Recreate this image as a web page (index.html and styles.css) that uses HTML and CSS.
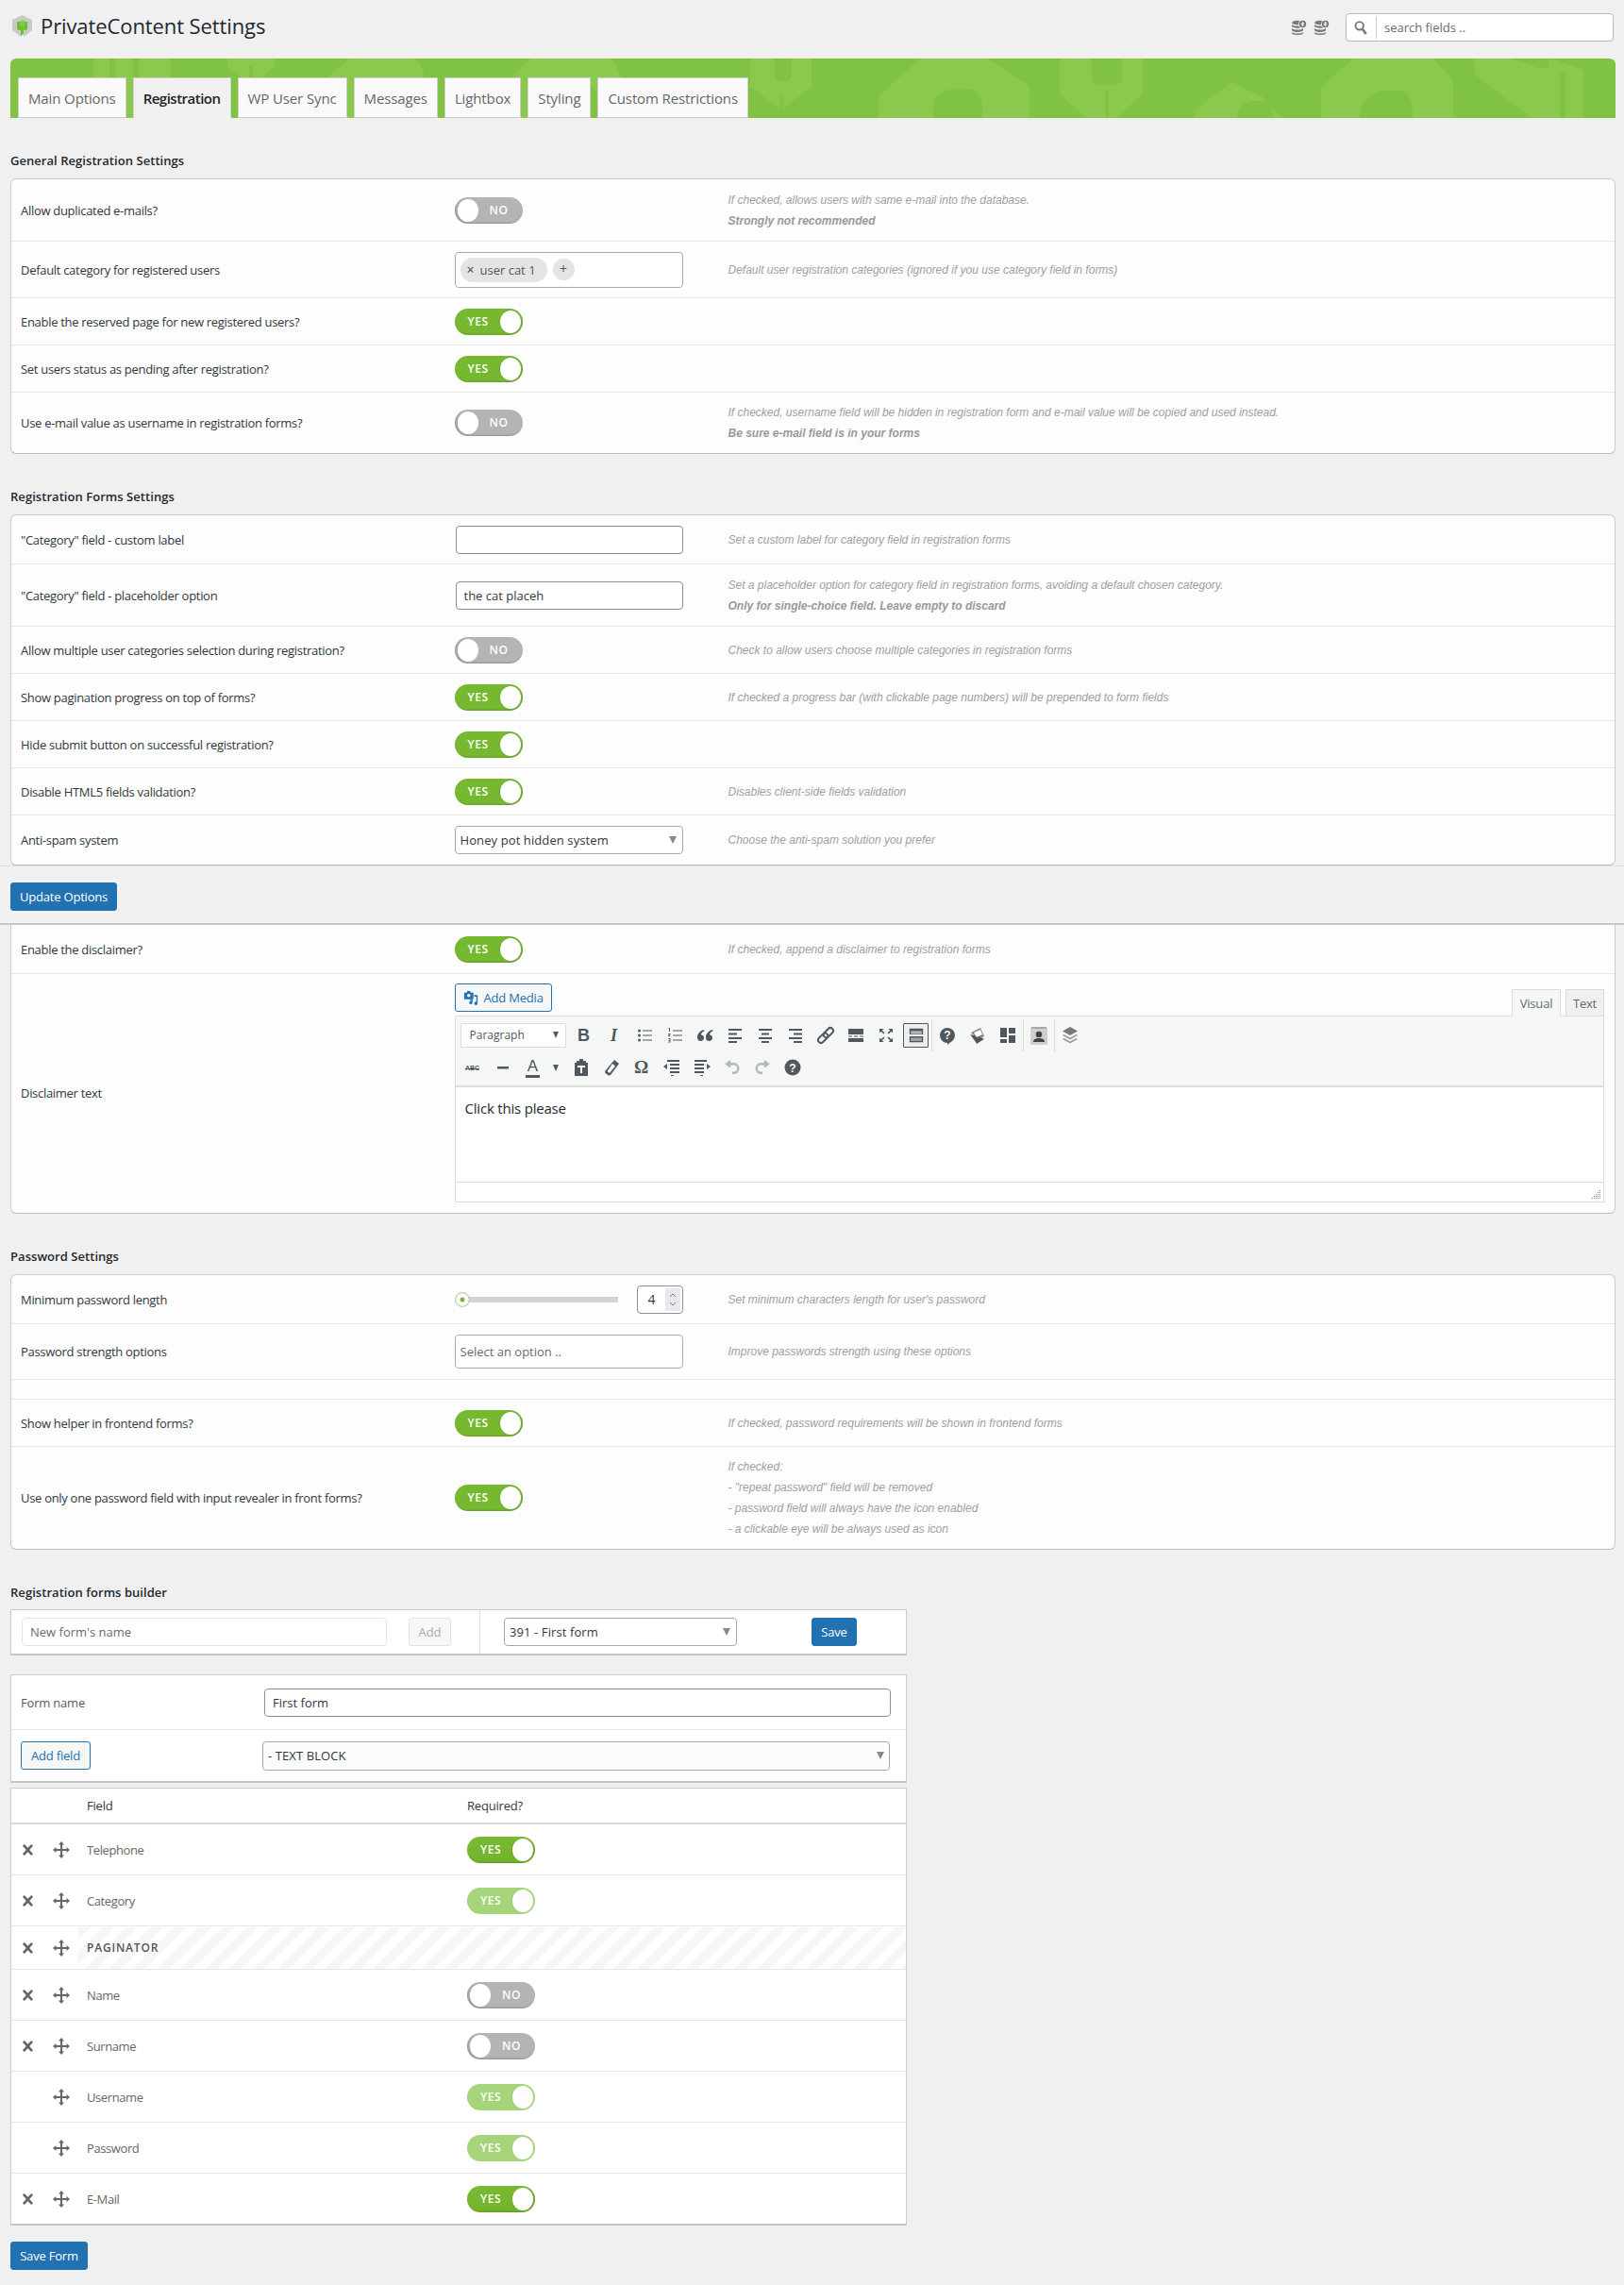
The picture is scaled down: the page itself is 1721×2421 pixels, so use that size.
FILE: index.html
```html
<!DOCTYPE html>
<html lang="en">
<head>
<meta charset="utf-8">
<title>PrivateContent Settings</title>
<link rel="stylesheet" href="styles.css">
</head>
<body>
<svg class="defs" width="0" height="0" aria-hidden="true">
  <symbol id="i-move" viewBox="0 0 18 18"><path d="M9 0l3 3.4h-2v4.6h4.600v-2l3.400 3-3.400 3v-2h-4.600v4.600h2l-3 3.400-3-3.400h2v-4.600h-4.600v2l-3.400-3 3.400-3v2h4.600v-4.600h-2z"/></symbol>
  <symbol id="i-x" viewBox="0 0 14 14"><path d="M1 2.500l2-2 4 4.200 4-4.200 2 2-4.200 4.500 4.200 4.500-2 2-4-4.200-4 4.200-2-2 4.200-4.500z"/></symbol>
  <symbol id="i-db-up" viewBox="0 0 16 16"><ellipse cx="6" cy="3" rx="6" ry="2.200"/><path d="M0 5v1.500c0 1.200 2.700 2.200 6 2.200s6-1 6-2.200v-1.500c-1 1-3.500 1.600-6 1.600s-5-.6-6-1.600zM0 9v1.800c0 1.200 2.700 2.200 6 2.200s6-1 6-2.200v-1.800c-1 1-3.500 1.600-6 1.600s-5-.6-6-1.600zM0 13v1c0 1.200 2.700 2 6 2s6-.8 6-2v-1c-1 1-3.500 1.500-6 1.500s-5-.5-6-1.500z"/><circle cx="11.500" cy="4.500" r="4.500" fill="#f1f1f1"/><circle cx="11.500" cy="4.500" r="3.700"/><path d="M11.500 2l2.200 2.500h-1.300v2.300h-1.800v-2.300h-1.300z" fill="#f1f1f1"/></symbol>
  <symbol id="i-db-down" viewBox="0 0 16 16"><ellipse cx="6" cy="3" rx="6" ry="2.200"/><path d="M0 5v1.500c0 1.200 2.700 2.200 6 2.200s6-1 6-2.200v-1.500c-1 1-3.500 1.600-6 1.600s-5-.6-6-1.600zM0 9v1.800c0 1.200 2.700 2.200 6 2.200s6-1 6-2.200v-1.800c-1 1-3.500 1.600-6 1.600s-5-.6-6-1.600zM0 13v1c0 1.200 2.700 2 6 2s6-.8 6-2v-1c-1 1-3.500 1.500-6 1.500s-5-.5-6-1.500z"/><circle cx="11.500" cy="4.500" r="4.500" fill="#f1f1f1"/><circle cx="11.500" cy="4.500" r="3.700"/><path d="M11.500 7l-2.200-2.500h1.300v-2.300h1.800v2.300h1.300z" fill="#f1f1f1"/></symbol>
</svg>

<div class="page">
  <header class="head">
    <div class="brand">
      <svg class="logo" viewBox="0 0 21 23" width="21" height="23"><path d="M10.500 0l10.500 5v11l-9 7v-6h-3v6l-9-7v-11z" fill="#c9c9c9"/><path d="M5 7h11v7q0 2-2 2h-2v4l-3 2v-6h-2q-2 0-2-2z" fill="#6fbf2f"/><path d="M8 5h5v7h-5z" fill="#8fd24e" opacity=".6"/></svg>
      <h1 class="title">PrivateContent Settings</h1>
    </div>
    <div class="tools">
      <svg class="db" width="16" height="16"><use href="#i-db-up"/></svg>
      <svg class="db db-2" width="16" height="16"><use href="#i-db-down"/></svg>
      <label class="search">
        <svg class="search-ico" viewBox="0 0 16 18" width="14" height="17"><circle cx="6.500" cy="6.500" r="4.800" fill="none" stroke="#777" stroke-width="2.200"/><path d="M10 10.500l4.500 6" stroke="#777" stroke-width="3" fill="none"/></svg>
        <input class="search-input" type="text" placeholder="search fields ..">
      </label>
    </div>
  </header>

  <nav class="tabs">
    <svg class="tabs-art" viewBox="0 0 1701 63" preserveAspectRatio="none" aria-hidden="true">
      <g fill="#8ac94e">
        <path d="M88 0h82v63h-82z"/><path d="M230 0h50v8l-25 22-25-22z"/>
        <path d="M329 26l30-26h70q10 8 10 25v38h-110z"/><path d="M526 24l26-24h85l12 22v41h-123z"/>
        <path d="M784 0h65v30l-32 24-33-24z"/>
        <path d="M920 40l45-40h70l45 30v33h-160z"/><path d="M1112 0h88v37l-28 26h-32l-28-26z"/><path d="M1255 55l39-30 35 17 18 21h-92z"/>
        <path d="M1389 30l34-30h85l21 24v39h-140z"/><path d="M1551 0h80l36 12v51h-55l-60-46z"/>
      </g>
      <g fill="#80c342">
        <path d="M105 0h6v63h-6zM130 0h6v63h-6z"/><path d="M253 8h4v22h-4z"/>
        <path d="M378 45q0-18 20-18h22q4 6 4 18v18h-46z"/><path d="M578 45q0-16 16-16h22q6 6 6 18v16h-44z"/>
        <path d="M810 0v16q0 8 8 8h2q8 0 8-8v-16zM815 40h5v23h-5z"/>
        <path d="M978 50q0-14 20-18h20q12 4 12 20v11h-52z"/><path d="M1146 0v20q0 8 10 8h14q8 0 8-8v-20zM1160 35h4v28h-4z"/>
        <path d="M1300 63q0-18 20-18h12q6 6 6 18z"/><path d="M1430 60q0-20 24-26h22q10 6 10 26v3h-56z"/><path d="M1590 0h40v10h-10zM1642 15h6v48h-6z"/>
      </g>
    </svg>
    <a class="tab">Main Options</a>
    <a class="tab tab-active">Registration</a>
    <a class="tab">WP User Sync</a>
    <a class="tab">Messages</a>
    <a class="tab">Lightbox</a>
    <a class="tab">Styling</a>
    <a class="tab">Custom Restrictions</a>
  </nav>

  <h3 class="sect">General Registration Settings</h3>
  <section class="card">
    <div class="row h66">
      <div class="lbl">Allow duplicated e-mails?</div>
      <div class="ctl"><span class="tg tg-no"><span class="tg-t">NO</span><i class="knob"></i></span></div>
      <div class="help">If checked, allows users with same e-mail into the database.<br><strong>Strongly not recommended</strong></div>
    </div>
    <div class="row h60">
      <div class="lbl">Default category for registered users</div>
      <div class="ctl"><div class="tagbox"><span class="tag"><b class="tag-x">×</b>user cat 1</span><span class="tag-add">+</span></div></div>
      <div class="help">Default user registration categories (ignored if you use category field in forms)</div>
    </div>
    <div class="row">
      <div class="lbl">Enable the reserved page for new registered users?</div>
      <div class="ctl"><span class="tg tg-yes"><span class="tg-t">YES</span><i class="knob"></i></span></div>
      <div class="help"></div>
    </div>
    <div class="row">
      <div class="lbl">Set users status as pending after registration?</div>
      <div class="ctl"><span class="tg tg-yes"><span class="tg-t">YES</span><i class="knob"></i></span></div>
      <div class="help"></div>
    </div>
    <div class="row h64 last">
      <div class="lbl">Use e-mail value as username in registration forms?</div>
      <div class="ctl"><span class="tg tg-no"><span class="tg-t">NO</span><i class="knob"></i></span></div>
      <div class="help">If checked, username field will be hidden in registration form and e-mail value will be copied and used instead.<br><strong>Be sure e-mail field is in your forms</strong></div>
    </div>
  </section>

  <h3 class="sect">Registration Forms Settings</h3>
  <section class="card">
    <div class="row h52">
      <div class="lbl">"Category" field - custom label</div>
      <div class="ctl"><input class="inp inp-shift" type="text"></div>
      <div class="help">Set a custom label for category field in registration forms</div>
    </div>
    <div class="row h66">
      <div class="lbl">"Category" field - placeholder option</div>
      <div class="ctl"><input class="inp inp-shift" type="text" value="the cat placeh"></div>
      <div class="help">Set a placeholder option for category field in registration forms, avoiding a default chosen category.<br><strong>Only for single-choice field. Leave empty to discard</strong></div>
    </div>
    <div class="row">
      <div class="lbl">Allow multiple user categories selection during registration?</div>
      <div class="ctl"><span class="tg tg-no"><span class="tg-t">NO</span><i class="knob"></i></span></div>
      <div class="help">Check to allow users choose multiple categories in registration forms</div>
    </div>
    <div class="row">
      <div class="lbl">Show pagination progress on top of forms?</div>
      <div class="ctl"><span class="tg tg-yes"><span class="tg-t">YES</span><i class="knob"></i></span></div>
      <div class="help">If checked a progress bar (with clickable page numbers) will be prepended to form fields</div>
    </div>
    <div class="row">
      <div class="lbl">Hide submit button on successful registration?</div>
      <div class="ctl"><span class="tg tg-yes"><span class="tg-t">YES</span><i class="knob"></i></span></div>
      <div class="help"></div>
    </div>
    <div class="row">
      <div class="lbl">Disable HTML5 fields validation?</div>
      <div class="ctl"><span class="tg tg-yes"><span class="tg-t">YES</span><i class="knob"></i></span></div>
      <div class="help">Disables client-side fields validation</div>
    </div>
    <div class="row h52 last">
      <div class="lbl">Anti-spam system</div>
      <div class="ctl"><div class="sel">Honey pot hidden system</div></div>
      <div class="help">Choose the anti-spam solution you prefer</div>
    </div>
  </section>

  <div class="savebar"><button class="btn-primary">Update Options</button></div>

  <section class="card card-after-bar">
    <div class="row h52">
      <div class="lbl">Enable the disclaimer?</div>
      <div class="ctl"><span class="tg tg-yes"><span class="tg-t">YES</span><i class="knob"></i></span></div>
      <div class="help">If checked, append a disclaimer to registration forms</div>
    </div>
    <div class="row row-editor last">
      <div class="lbl">Disclaimer text</div>
      <div class="editor">
        <div class="ed-top">
          <button class="btn-media"><svg viewBox="0 0 18 18" width="18" height="18"><path d="M1 3h3l1-2h3l1 2h3v8h-11z" fill="#2271b1"/><circle cx="6.500" cy="6.500" r="2" fill="#fff"/><path d="M13 6h4v10a2 2 0 1 1-1.500-2v-6h-2.500zM8 11h3v4a2 2 0 1 1-1.500-2v-1h-1.500z" fill="#2271b1"/></svg>Add Media</button>
          <div class="ed-tabs"><span class="ed-tab ed-tab-on">Visual</span><span class="ed-tab">Text</span></div>
        </div>
        <div class="toolbar">
          <div class="tb-row">
            <div class="tb-sel">Paragraph</div>
            <span class="tb"><span class="g-b">B</span></span>
            <span class="tb"><span class="g-i">I</span></span>
            <span class="tb"><svg viewBox="0 0 20 20"><circle cx="4.500" cy="5" r="1.500"/><circle cx="4.500" cy="10" r="1.500"/><circle cx="4.500" cy="15" r="1.500"/><path d="M8 4.500h10v1h-10zM8 9.500h10v1h-10zM8 14.500h10v1h-10z"/></svg></span>
            <span class="tb"><svg viewBox="0 0 20 20"><path d="M3.500 2h1.500v4h-1v-3h-.5zM3 8h2.500v1l-1.500 1.500h1.500v.7h-2.500v-.9l1.500-1.600h-1.500zM3 13h2.500v4.500h-2.500v-.8h1.500v-1h-1.200v-.8h1.200v-1.100h-1.500z"/><path d="M8 4.500h10v1h-10zM8 9.500h10v1h-10zM8 14.500h10v1h-10z"/></svg></span>
            <span class="tb"><svg viewBox="0 0 20 20"><path d="M9 4c-4 1-7 4-7 8 0 3 1.500 4 3.500 4s3.500-1.500 3.500-3.500-1.500-3-3-3c0-2 1.500-3.500 3.500-4zM18 4c-4 1-7 4-7 8 0 3 1.500 4 3.500 4s3.500-1.500 3.500-3.500-1.500-3-3-3c0-2 1.500-3.500 3.500-4z"/></svg></span>
            <span class="tb"><svg viewBox="0 0 20 20"><path d="M3 3h14v2h-14zM3 7.500h9v2h-9zM3 12h14v2h-14zM3 16h9v2h-9z"/></svg></span>
            <span class="tb"><svg viewBox="0 0 20 20"><path d="M3 3h14v2h-14zM6 7.500h8v2h-8zM3 12h14v2h-14zM6 16h8v2h-8z"/></svg></span>
            <span class="tb"><svg viewBox="0 0 20 20"><path d="M3 3h14v2h-14zM8 7.500h9v2h-9zM3 12h14v2h-14zM8 16h9v2h-9z"/></svg></span>
            <span class="tb"><svg viewBox="0 0 20 20"><g transform="rotate(-45 10 10)" fill="none" stroke="#50575e" stroke-width="2"><rect x="0" y="7" width="12" height="6" rx="3"/><rect x="8" y="7" width="12" height="6" rx="3"/></g></svg></span>
            <span class="tb"><svg viewBox="0 0 20 20"><path d="M2 3h16v6h-16zM2 13h16v4h-16zM2 10.500h4v1h-4zM8 10.500h4v1h-4zM14 10.500h4v1h-4z"/></svg></span>
            <span class="tb"><svg viewBox="0 0 20 20"><path d="M3 3h4.500l-4.500 4.500zM17 3v4.500l-4.500-4.500zM3 17v-4.500l4.500 4.500zM17 17h-4.500l4.500-4.500z"/><path d="M5 5l3 3M15 5l-3 3M5 15l3-3M15 15l-3-3" stroke="#50575e" stroke-width="1.700"/></svg></span>
            <span class="tb tb-on"><svg viewBox="0 0 20 20"><path d="M2 2h16v7h-16zM2 11h16v7h-16z"/><path d="M3.500 5h13v1h-13zM3.500 7h13v1h-13zM3.500 13h13v1h-13zM3.500 15h13v1h-13z" fill="#eee"/></svg></span>
            <span class="tb-sep"></span>
            <span class="tb"><svg viewBox="0 0 20 20"><path d="M10 2a8 8 0 0 1 3 15.400l-3 2.600v-2a8 8 0 0 1 0-16z"/><text x="10" y="14" class="tb-q">?</text></svg></span>
            <span class="tb"><svg viewBox="0 0 20 20"><path d="M3 7l10-5 4 9-7 4z" fill="#888"/><path d="M2 9l6 8 1 2 3-2 5-3-4-2z" fill="#555"/><path d="M6 7l7-3 2 5-6 3z" fill="#fff"/></svg></span>
            <span class="tb"><svg viewBox="0 0 20 20"><path d="M2 2h7v10h-7zM11 2h7v6h-7zM2 14h7v4h-7zM11 10h7v8h-7z"/></svg></span>
            <span class="tb-sep"></span>
            <span class="tb"><svg viewBox="0 0 20 20"><path d="M1 2h18v18h-18z" fill="#cfcfcf"/><path d="M2 1h16v2h-16z" fill="#aaa"/><circle cx="10" cy="9" r="3.300" fill="#444"/><path d="M4 17q0-4 6-4t6 4z" fill="#444"/></svg></span>
            <span class="tb-sep"></span>
            <span class="tb"><svg viewBox="0 0 20 20"><path d="M10 1l8 4.500-8 4.500-8-4.500z" fill="#777"/><path d="M3.500 9l6.500 3.600 6.500-3.600 1.500 1-8 4.500-8-4.500zM3.500 13l6.500 3.600 6.500-3.600 1.500 1-8 4.500-8-4.500z" fill="#999"/></svg></span>
          </div>
          <div class="tb-row tb-row-2">
            <span class="tb"><span class="g-abc">ABC</span></span>
            <span class="tb"><svg viewBox="0 0 20 20"><path d="M4 9h12v2.500h-12z"/></svg></span>
            <span class="tb tb-color"><span class="g-a">A</span></span>
            <span class="tb-caret"></span>
            <span class="tb"><svg viewBox="0 0 20 20"><path d="M8 1h4v2h3v2h2v14h-14v-14h2v-2h3z"/><path d="M6 8h8v2h-3v6h-2v-6h-3z" fill="#f5f7f7"/></svg></span>
            <span class="tb"><svg viewBox="0 0 20 20"><path d="M13 2l5 4-9 12-2 .5-4-3 .5-2z"/><path d="M11 6l3 2.500-6 7.500-2.500-2z" fill="#f5f7f7"/></svg></span>
            <span class="tb"><span class="g-o">Ω</span></span>
            <span class="tb"><svg viewBox="0 0 20 20"><path d="M5 2h13v2h-13zM8 6h10v2h-10zM8 10h10v2h-10zM8 14h10v2h-10zM9 18h3v1h-3zM1 9l4-3v6z"/></svg></span>
            <span class="tb"><svg viewBox="0 0 20 20"><path d="M2 2h13v2h-13zM2 6h10v2h-10zM2 10h10v2h-10zM2 14h10v2h-10zM8 18h3v1h-3zM19 9l-4-3v6z"/></svg></span>
            <span class="tb tb-off"><svg viewBox="0 0 20 20"><path d="M8 2v3h3a6 6 0 0 1 1 12h-2v-2.500h2a3.500 3.500 0 0 0-1-7h-3v3l-6-4.200z"/></svg></span>
            <span class="tb tb-off"><svg viewBox="0 0 20 20"><path d="M12 2v3h-3a6 6 0 0 0-1 12h2v-2.500h-2a3.500 3.500 0 0 1 1-7h3v3l6-4.200z"/></svg></span>
            <span class="tb"><svg viewBox="0 0 20 20"><circle cx="10" cy="10" r="8.500"/><text x="10" y="15" class="tb-q">?</text></svg></span>
          </div>
        </div>
        <div class="ed-body">Click this please</div>
        <div class="ed-status"><svg class="grip" viewBox="0 0 10 10" width="10" height="10"><path d="M8 0h1v1h-1zM6 2h1v1h-1zM8 2h1v1h-1zM4 4h1v1h-1zM6 4h1v1h-1zM8 4h1v1h-1zM2 6h1v1h-1zM4 6h1v1h-1zM6 6h1v1h-1zM8 6h1v1h-1zM0 8h1v1h-1zM2 8h1v1h-1zM4 8h1v1h-1zM6 8h1v1h-1zM8 8h1v1h-1z" fill="#888"/></svg></div>
      </div>
    </div>
  </section>

  <h3 class="sect">Password Settings</h3>
  <section class="card">
    <div class="row h52">
      <div class="lbl">Minimum password length</div>
      <div class="ctl slider">
        <div class="track"><i class="thumb"></i></div>
        <div class="num"><span>4</span><i class="spin"><svg viewBox="0 0 10 18" width="10" height="18"><path d="M2 6l3-3 3 3M2 12l3 3 3-3" fill="none" stroke="#777" stroke-width="1"/></svg></i></div>
      </div>
      <div class="help">Set minimum characters length for user's password</div>
    </div>
    <div class="row h59">
      <div class="lbl">Password strength options</div>
      <div class="ctl"><input class="inp inp-tall" type="text" placeholder="Select an option .."></div>
      <div class="help">Improve passwords strength using these options</div>
    </div>
    <div class="row h21"></div>
    <div class="row">
      <div class="lbl">Show helper in frontend forms?</div>
      <div class="ctl"><span class="tg tg-yes"><span class="tg-t">YES</span><i class="knob"></i></span></div>
      <div class="help">If checked, password requirements will be shown in frontend forms</div>
    </div>
    <div class="row h108 last">
      <div class="lbl">Use only one password field with input revealer in front forms?</div>
      <div class="ctl"><span class="tg tg-yes"><span class="tg-t">YES</span><i class="knob"></i></span></div>
      <div class="help">If checked:<br>- "repeat password" field will be removed<br>- password field will always have the icon enabled<br>- a clickable eye will be always used as icon</div>
    </div>
  </section>

  <h3 class="sect sect-builder">Registration forms builder</h3>
  <section class="box builder">
    <div class="bl">
      <input class="inp inp-soft" type="text" placeholder="New form's name">
      <button class="btn-off">Add</button>
    </div>
    <div class="br">
      <div class="sel sel-form">391 - First form</div>
      <button class="btn-primary btn-save">Save</button>
    </div>
  </section>

  <section class="box formbox">
    <div class="f-row f-row-1">
      <label class="f-lbl">Form name</label>
      <input class="inp inp-name" type="text" value="First form">
    </div>
    <div class="f-row f-row-2">
      <button class="btn-line">Add field</button>
      <div class="sel sel-wide">- TEXT BLOCK</div>
    </div>
  </section>

  <section class="box fields">
    <div class="fr fr-head"><span></span><span></span><span class="fh">Field</span><span class="fh">Required?</span></div>
    <div class="fr"><svg class="ic-x"><use href="#i-x"/></svg><svg class="ic-m"><use href="#i-move"/></svg><span class="fn">Telephone</span><span class="tg tg-yes tg-t2"><span class="tg-t">YES</span><i class="knob"></i></span></div>
    <div class="fr"><svg class="ic-x"><use href="#i-x"/></svg><svg class="ic-m"><use href="#i-move"/></svg><span class="fn">Category</span><span class="tg tg-yes tg-dis"><span class="tg-t">YES</span><i class="knob"></i></span></div>
    <div class="fr fr-pag"><svg class="ic-x"><use href="#i-x"/></svg><svg class="ic-m"><use href="#i-move"/></svg><span class="fn-pag">PAGINATOR</span></div>
    <div class="fr"><svg class="ic-x"><use href="#i-x"/></svg><svg class="ic-m"><use href="#i-move"/></svg><span class="fn">Name</span><span class="tg tg-no"><span class="tg-t">NO</span><i class="knob"></i></span></div>
    <div class="fr"><svg class="ic-x"><use href="#i-x"/></svg><svg class="ic-m"><use href="#i-move"/></svg><span class="fn">Surname</span><span class="tg tg-no"><span class="tg-t">NO</span><i class="knob"></i></span></div>
    <div class="fr"><span></span><svg class="ic-m"><use href="#i-move"/></svg><span class="fn">Username</span><span class="tg tg-yes tg-dis"><span class="tg-t">YES</span><i class="knob"></i></span></div>
    <div class="fr"><span></span><svg class="ic-m"><use href="#i-move"/></svg><span class="fn">Password</span><span class="tg tg-yes tg-dis"><span class="tg-t">YES</span><i class="knob"></i></span></div>
    <div class="fr fr-last"><svg class="ic-x"><use href="#i-x"/></svg><svg class="ic-m"><use href="#i-move"/></svg><span class="fn">E-Mail</span><span class="tg tg-yes tg-t2"><span class="tg-t">YES</span><i class="knob"></i></span></div>
  </section>

  <button class="btn-primary btn-saveform">Save Form</button>
</div>
</body>
</html>
```

FILE: styles.css
```css
* { box-sizing: border-box; }
html, body { margin: 0; padding: 0; }
body {
  background: #f0f0f1;
  color: #32373c;
  font-family: "Open Sans", "Noto Sans", sans-serif;
  font-size: 13px;
  width: 1721px;
  height: 2421px;
  overflow: hidden;
}
.defs { position: absolute; }
.page { padding: 0 9px 15px 11px; }
button { font-family: inherit; cursor: pointer; }

/* header */
.head { height: 62px; display: flex; justify-content: space-between; align-items: center; padding: 0 2px 0 2px; }
.brand { display: flex; align-items: center; gap: 9px; margin-top: -8px; }
.logo { display: block; }
.title { margin: 0; font-size: 22px; font-weight: 400; color: #23282d; letter-spacing: -.1px; }
.tools { display: flex; align-items: center; margin-top: -4px; }
.db { fill: #777; display: block; margin-right: 8px; }
.db-2 { margin-right: 17px; }
.search { width: 284px; height: 30px; background: #fff; border: 1px solid #b9b9b9; border-radius: 4px; display: flex; align-items: center; padding-left: 8px; }
.search-ico { flex: none; }
.search-input { border: 0; border-left: 1px solid #ccc; outline: 0; margin-left: 9px; padding: 0 0 0 8px; height: 24px; flex: 1; min-width: 0; font: inherit; background: transparent; }
.search-input::placeholder, .inp::placeholder { color: #6a6a6a; opacity: 1; }

/* tabs */
.tabs { position: relative; height: 63px; background: #80c342; border-radius: 6px 6px 0 0; display: flex; align-items: flex-end; gap: 7px; padding-left: 8px; margin-bottom: 1px; overflow: hidden; }
.tabs-art { position: absolute; inset: 0; width: 100%; height: 100%; }
.tab { position: relative; height: 43px; display: flex; align-items: center; padding: 0 10px; background: #fafafa; border: 1px solid #cfcfcf; border-bottom: 1px solid #ccc; color: #666; font-size: 15px; font-weight: 400; letter-spacing: -.12px; }
.tab-active { background: #f1f1f1; color: #222; font-weight: 600; letter-spacing: -.5px; border-bottom-color: #f1f1f1; }

/* section titles */
.sect { height: 20px; line-height: 20px; margin: 35px 0 9px; font-size: 13px; font-weight: 600; color: #23282d; letter-spacing: .05px; }
.sect-builder { margin-bottom: 8px; }

/* cards and rows */
.card { background: #fdfdfd; border: 1px solid #ccc; border-bottom-color: #bbb; border-radius: 6px; }
.card-after-bar { border-top: 0; border-radius: 0 0 6px 6px; }
.row { display: grid; grid-template-columns: 459.5px 242px 1fr; column-gap: 0; align-items: center; min-height: 50px; padding-left: 10px; padding-right: 11px; border-bottom: 1px solid #e7e7e7; }
.row.last { border-bottom: 0; }
.h21 { min-height: 21px; }
.h52 { min-height: 52px; }
.h59 { min-height: 59px; }
.h60 { min-height: 60px; }
.h64 { min-height: 64px; }
.h66 { min-height: 66px; }
.h108 { min-height: 108px; }
.lbl { color: #32373c; letter-spacing: -.3px; }
.ctl { display: flex; align-items: center; }
.help { margin-left: 48px; font-family: "Liberation Sans", Arial, sans-serif; font-style: italic; font-size: 12px; line-height: 22px; color: #a0a0a0; }
.help strong { font-weight: 700; color: #999; }

/* toggles */
.tg { position: relative; display: inline-block; width: 72px; height: 28px; border-radius: 14px; color: #fff; font-size: 12px; font-weight: 600; flex: none; }
.tg-t { position: absolute; top: 0; line-height: 27px; letter-spacing: .6px; }
.knob { position: absolute; top: 2px; width: 22px; height: 24px; border-radius: 50%; background: #fff; }
.tg-yes { background: #76b82f; box-shadow: inset -1px -1px 2px rgba(0,0,0,.15); }
.tg-yes .tg-t { left: 14px; }
.tg-yes .knob { right: 2px; box-shadow: -1px 0 1px rgba(0,0,0,.06); }
.tg-no { background: #b4b4b4; box-shadow: inset 1px -1px 2px rgba(0,0,0,.2); }
.tg-no .tg-t { left: 37px; }
.tg-no .knob { left: 3px; }
.tg-dis { background: #a6d47a; box-shadow: none; }
.tg-t2 { background: linear-gradient(#79b933, #72b32c); }

/* inputs */
.inp { display: block; width: 242px; height: 30px; padding: 0 8px; background: #fff; border: 1px solid #8c8f94; border-radius: 4px; font: inherit; color: #32373c; outline: 0; }
.inp-shift { margin-left: 1px; }
.inp-tall { height: 36px; border-color: #aaa; padding: 0 5px; }
.inp-soft { width: 387px; border-color: #e3e3e3; box-shadow: none; }
.inp-name { width: 664px; }
.sel { position: relative; width: 242px; height: 30px; line-height: 28px; padding-left: 5px; background: #fff; border: 1px solid #a8a8a8; border-radius: 4px; color: #32373c; letter-spacing: .1px; }
.sel::after { content: ""; position: absolute; right: 6px; top: 10px; border: 4.500px solid transparent; border-top: 8px solid #888; border-bottom: 0; }
.sel-form { width: 247px; }
.sel-wide { width: 665px; height: 31px; margin-right: 1px; background: #fcfcfc; }
.sel-wide::after { right: 5px; }
.tagbox { width: 242px; height: 38px; background: #fff; border: 1px solid #aaa; border-radius: 4px; display: flex; align-items: center; gap: 6px; padding-left: 5px; }
.tag { display: flex; align-items: center; height: 26px; padding: 0 9px 0 7px; background: #e4e4e4; border-radius: 13px; color: #555; width: 92px; white-space: nowrap; }
.tag-x { font-weight: 400; font-size: 14px; margin-right: 6px; color: #444; }
.tag-add { width: 23px; height: 23px; border-radius: 50%; background: #e4e4e4; color: #555; font-size: 14px; line-height: 22px; text-align: center; }

/* buttons */
.btn-primary { display: block; height: 30px; padding: 0; background: #2271b1; border: 1px solid #2271b1; border-radius: 3px; color: #fff; font-size: 13px; letter-spacing: -.2px; }
.savebar { margin: 0 -9px 0 -11px; height: 63px; padding: 17px 11px 0; background: #f1f1f1; border-top: 1px solid #ddd; border-bottom: 2px solid #c8c8c8; }
.savebar .btn-primary { width: 113px; }
.btn-save { width: 48px; margin-left: 79px; }
.btn-saveform { width: 82px; margin-top: 17px; }
.btn-off { width: 45px; height: 30px; padding: 0; border: 1px solid #e2e4e4; border-radius: 3px; background: #f6f7f7; color: #a7aaad; font-size: 13px; }
.btn-line { width: 74px; height: 30px; padding: 0; background: #f6f7f7; border: 1px solid #2271b1; border-radius: 3px; color: #2271b1; font-size: 13px; letter-spacing: -.2px; }

/* editor */
.row-editor { min-height: 253px; padding-top: 10px; padding-bottom: 11px; grid-template-columns: 459.5px 1fr; }
.editor { min-width: 0; }
.ed-top { display: flex; justify-content: space-between; align-items: flex-end; height: 34px; }
.btn-media { align-self: flex-start; display: flex; align-items: center; gap: 6px; width: 103px; height: 30px; padding: 0 0 0 8px; background: #f6f7f7; border: 1px solid #2271b1; border-radius: 3px; color: #2271b1; font-size: 13px; letter-spacing: -.2px; white-space: nowrap; }
.btn-media svg { flex: none; width: 16px; }
.ed-tabs { display: flex; gap: 5px; margin-bottom: -1px; position: relative; }
.ed-tab { width: 41px; height: 29px; line-height: 28px; text-align: center; background: #f0f0f1; border: 1px solid #dcdcde; color: #646970; font-size: 13px; letter-spacing: -.2px; }
.ed-tab-on { width: 52px; background: #f6f7f7; border-bottom-color: #f6f7f7; }
.toolbar { height: 76px; background: #f5f7f7; border: 1px solid #dcdcde; border-bottom: 2px solid #dcdcdc; padding-top: 3px; }
.tb-row { display: flex; align-items: center; height: 34px; padding-left: 2px; }
.tb-sel { width: 112px; height: 26px; line-height: 24px; padding-left: 9px; margin: 0 3px 0 3px; background: #fff; border: 1px solid #dcdcde; color: #50575e; position: relative; font-size: 12px; }
.tb-sel::after { content: ""; position: absolute; right: 7px; top: 8px; border: 3.500px solid transparent; border-top: 7px solid #50575e; border-bottom: 0; }
.tb { width: 32px; height: 26px; display: flex; align-items: center; justify-content: center; flex: none; }
.tb svg { width: 20px; height: 20px; fill: #50575e; display: block; }
.tb-on svg { width: 18px; height: 18px; }
.tb-on { position: relative; }
.tb-on::before { content: ""; position: absolute; left: 2px; right: 3px; top: 0; bottom: 0; border: 1px solid #50575e; background: #eee; border-radius: 1px; }
.tb-on svg { position: relative; }
.tb-sep { width: 1px; height: 34px; background: #dcdcde; flex: none; }
.tb-off svg { fill: #b4b9be; }
.tb-q { fill: #f5f7f7; font-family: "Liberation Sans", sans-serif; font-size: 12px; font-weight: 700; text-anchor: middle; }
.g-b { font: 700 18px "Liberation Sans", sans-serif; color: #50575e; }
.g-i { font: italic 700 18px "Liberation Serif", serif; color: #50575e; }
.g-abc { font: 700 7px "Liberation Sans", sans-serif; color: #50575e; text-decoration: line-through; }
.g-a { font: 400 17px "Liberation Sans", sans-serif; color: #50575e; border-bottom: 3px solid #50575e; padding: 0 2px; line-height: 19px; }
.g-o { font: 700 19px "Liberation Serif", serif; color: #50575e; }
.tb-color { width: 26px; margin-left: 3px; }
.tb-caret { width: 0; height: 0; margin: 0 8px; border: 3.500px solid transparent; border-top: 7px solid #50575e; border-bottom: 0; flex: none; }
.ed-body { height: 100px; padding: 11px 10px; background: #fff; border-left: 1px solid #dcdcde; border-right: 1px solid #dcdcde; font-size: 15px; line-height: 22px; color: #23282d; letter-spacing: -.2px; }
.ed-status { position: relative; height: 22px; background: #fff; border: 1px solid #dcdcde; }
.grip { position: absolute; right: 2px; bottom: 2px; }

/* password */
.slider { justify-content: space-between; }
.track { position: relative; width: 165px; height: 6px; margin-left: 8px; background: #d3d3d3; }
.thumb { position: absolute; left: -8px; top: -5px; width: 16px; height: 16px; border-radius: 50%; background: #76b82f; border: 1px solid #bfcfb0; box-shadow: inset 0 0 0 4.500px #fff; }
.num { width: 49px; height: 30px; display: flex; align-items: center; justify-content: space-between; padding: 0 2px 0 11px; background: #fff; border: 1px solid #8c8f94; border-radius: 4px; font-size: 14px; }
.spin { display: flex; align-items: center; justify-content: center; width: 16px; height: 24px; padding: 0; background: #e8e8ee; }

/* builder */
.box { width: 950px; background: #fff; border: 1px solid #ccc; border-bottom: 2px solid #c6c6c6; }
.builder { height: 49px; display: flex; }
.bl { width: 497px; display: flex; gap: 23px; padding: 8px 0 0 11px; border-right: 1px solid #e0e0e0; }
.br { display: flex; gap: 0; padding: 8px 0 0 25px; }
.btn-off, .btn-save { flex: none; }
.formbox { margin-top: 20px; }
.f-row { display: flex; align-items: center; justify-content: space-between; padding: 0 16px 0 10px; }
.f-row-1 { height: 58px; border-bottom: 1px solid #e7e7e7; }
.f-row-2 { height: 54px; }
.f-lbl { color: #5a5a5a; letter-spacing: -.2px; }
.fields { margin-top: 5px; }
.fr { display: grid; grid-template-columns: 35px 36px 412px 1fr; align-items: center; height: 54px; border-bottom: 1px solid #e7e7e7; }
.fr-head { height: 38px; border-bottom: 2px solid #d8d8d8; }
.fr-last { border-bottom: 0; height: 53px; }
.fh { color: #32373c; letter-spacing: -.2px; }
.fr-head .fh:nth-child(3) { padding-left: 9px; }
.fn { padding-left: 9px; color: #666; letter-spacing: -.4px; }
.ic-x { width: 13px; height: 14px; fill: #666; justify-self: center; }
.ic-m { width: 18px; height: 18px; fill: #666; justify-self: center; }
.fr-pag { height: 46px; }
.fn-pag { grid-column: 3 / 5; height: 44px; line-height: 44px; padding-left: 9px; font-size: 12px; font-weight: 600; letter-spacing: .8px; color: #555; background: repeating-linear-gradient(135deg, #f6f6f6 0 9px, #fff 9px 18px); }
```
